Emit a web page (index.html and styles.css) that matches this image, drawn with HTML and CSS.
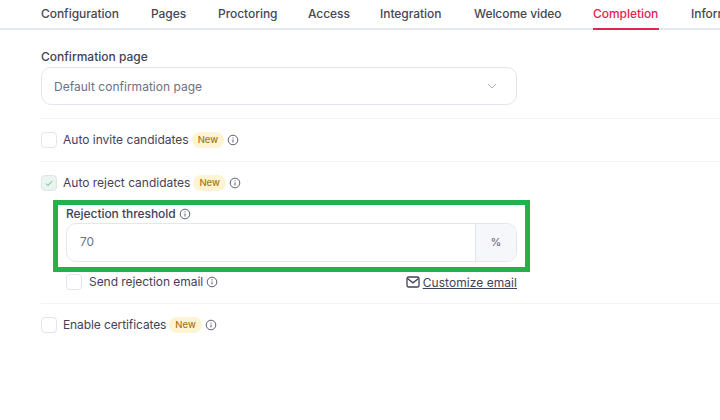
FILE: index.html
```html
<!DOCTYPE html>
<html lang="en">
<head>
<meta charset="utf-8">
<title>Completion settings</title>
<link rel="stylesheet" href="styles.css">
</head>
<body>
<div class="page">
  <nav class="tabs">
    <span class="tab t1">Configuration</span>
    <span class="tab t2">Pages</span>
    <span class="tab t3">Proctoring</span>
    <span class="tab t4">Access</span>
    <span class="tab t5">Integration</span>
    <span class="tab t6">Welcome video</span>
    <span class="tab t7 active">Completion</span>
    <span class="tab t8">Information</span>
  </nav>
  <main class="content">
    <section class="section first">
      <div class="label">Confirmation page</div>
      <div class="select">
        <span>Default confirmation page</span>
        <svg class="chev" width="10" height="6" viewBox="0 0 10 6"><path d="M1 1l4 4 4-4" fill="none" stroke="#a9adb8" stroke-width="1"/></svg>
      </div>
    </section>
    <section class="section">
      <div class="row">
        <span class="check"></span>
        <span class="row-text">Auto invite candidates</span>
        <span class="badge">New</span>
        <svg class="info" viewBox="0 0 12 12"><circle cx="6" cy="6" r="4.8"/><path d="M6 5.5v3M6 3.4v1"/></svg>
      </div>
    </section>
    <section class="section">
      <div class="row">
        <span class="check on"><svg width="8" height="7" viewBox="0 0 8 7"><path d="M1 3.6l2 2 4-4.4" fill="none" stroke="#4fb887" stroke-width="1"/></svg></span>
        <span class="row-text">Auto reject candidates</span>
        <span class="badge">New</span>
        <svg class="info" viewBox="0 0 12 12"><circle cx="6" cy="6" r="4.8"/><path d="M6 5.5v3M6 3.4v1"/></svg>
      </div>
      <div class="nested">
        <div class="threshold-label">
          <span>Rejection threshold</span>
          <svg class="info" viewBox="0 0 12 12"><circle cx="6" cy="6" r="4.8"/><path d="M6 5.5v3M6 3.4v1"/></svg>
        </div>
        <div class="input">
          <span class="value">70</span>
          <span class="suffix">%</span>
        </div>
        <div class="email-row">
          <div class="row">
            <span class="check"></span>
            <span class="row-text send">Send rejection email</span>
            <svg class="info" viewBox="0 0 12 12"><circle cx="6" cy="6" r="4.8"/><path d="M6 5.5v3M6 3.4v1"/></svg>
          </div>
          <div class="customize">
            <svg width="14" height="12" viewBox="0 0 14 12"><rect x="1" y="1" width="12" height="10" rx="1.6" fill="none" stroke="#3f4359" stroke-width="1.3"/><path d="M1.5 2.5L7 6.8l5.5-4.3" fill="none" stroke="#3f4359" stroke-width="1.3"/></svg>
            <span class="link">Customize email</span>
          </div>
        </div>
      </div>
    </section>
    <section class="section">
      <div class="row">
        <span class="check"></span>
        <span class="row-text tight">Enable certificates</span>
        <span class="badge">New</span>
        <svg class="info" viewBox="0 0 12 12"><circle cx="6" cy="6" r="4.8"/><path d="M6 5.5v3M6 3.4v1"/></svg>
      </div>
    </section>
  </main>
  <div class="highlight"></div>
</div>
</body>
</html>
```

FILE: styles.css
```css
* { box-sizing: border-box; }
html, body { margin: 0; padding: 0; background: #fff; }
body {
  width: 720px;
  height: 420px;
  overflow: hidden;
  font-family: Inter, "Liberation Sans", sans-serif;
  color: #3f4359;
}
.page { position: relative; width: 720px; height: 420px; overflow: hidden; }
.tabs {
  display: flex;
  height: 30px;
  padding-left: 41px;
  border-bottom: 2px solid #e6e8f0;
  white-space: nowrap;
}
.tab {
  flex: none;
  height: 30px;
  padding-top: 5px;
  font-size: 12px;
  font-weight: 500;
  line-height: 17px;
  color: #454754;
  letter-spacing: -.05px;
}
.tab.t1 { width: 110px; }
.tab.t2 { width: 67px; }
.tab.t3 { width: 90px; }
.tab.t4 { width: 72px; }
.tab.t5 { width: 94px; }
.tab.t6 { width: 119px; }
.tab.t7 { width: 66px; margin-right: 32px; }
.tab.active { color: #e5234f; border-bottom: 2px solid #e5234f; }
.content { padding-left: 41px; }
.section { border-bottom: 1px solid #f2f3f7; padding: 12px 0; }
.section.first { padding: 18px 0 13px; }
.section:last-child { border-bottom: 0; }
.label {
  font-size: 12px;
  font-weight: 500;
  line-height: 17px;
  color: #3f4359;
  margin-bottom: 2px;
}
.select {
  display: flex;
  align-items: center;
  justify-content: space-between;
  width: 476px;
  height: 38px;
  padding: 0 19px 0 12px;
  border: 1px solid #e4e6ee;
  border-radius: 10px;
  font-size: 12px;
  letter-spacing: .02px;
  color: #6e7180;
}
.row { display: flex; align-items: center; height: 18px; }
.check {
  display: flex;
  align-items: center;
  justify-content: center;
  flex: none;
  width: 16px;
  height: 16px;
  margin-right: 6px;
  border: 1px solid #e2e4ec;
  border-radius: 4px;
  background: #fff;
}
.check.on { background: #eaf5f0; border-color: #dfe6e6; }
.row-text { font-size: 12px; font-weight: 400; line-height: 18px; color: #3f4359; }
.row-text.tight { letter-spacing: -.1px; }
.row-text.send { margin-left: 1px; letter-spacing: -.05px; }
.badge {
  margin-left: 3px;
  padding: 0 6px;
  height: 16px;
  line-height: 16px;
  border-radius: 8px;
  background: #fef4d3;
  color: #a5771c;
  font-size: 9.5px;
  font-weight: 500;
}
.info {
  flex: none;
  width: 12px;
  height: 12px;
  margin-left: 3px;
  fill: none;
  stroke: #5c6070;
  stroke-width: 1;
}
.nested { padding-left: 25px; width: 476px; }
.threshold-label {
  display: flex;
  align-items: center;
  height: 17px;
  margin-top: 13px;
  font-size: 12px;
  font-weight: 500;
  letter-spacing: -.05px;
  color: #3f4359;
}
.input {
  display: flex;
  align-items: stretch;
  height: 39px;
  margin-top: 1px;
  border: 1px solid #e4e6ee;
  border-radius: 10px;
  overflow: hidden;
}
.value { flex: 1; padding-left: 13px; font-size: 12px; line-height: 35px; color: #6e7180; }
.suffix {
  width: 41px;
  border-left: 1px solid #e4e6ee;
  background: #f6f7fb;
  font-size: 11px;
  line-height: 37px;
  text-align: center;
  color: #5c6070;
}
.email-row {
  display: flex;
  align-items: center;
  justify-content: space-between;
  margin-top: 11px;
}
.customize { display: flex; align-items: center; gap: 3px; font-size: 12px; letter-spacing: .05px; color: #3f4359; }
.link { text-decoration: underline; }
.highlight {
  position: absolute;
  left: 53px;
  top: 200px;
  width: 477px;
  height: 72px;
  border: 5px solid #22b14c;
}
```
